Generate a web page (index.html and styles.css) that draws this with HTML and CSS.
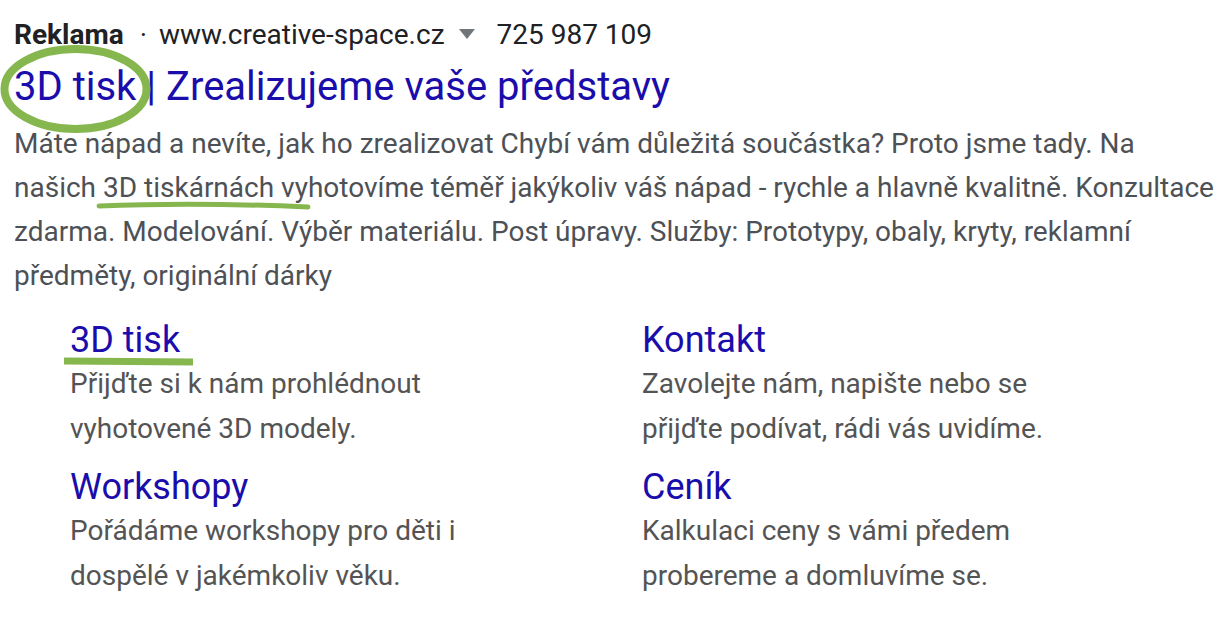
FILE: index.html
```html
<!DOCTYPE html>
<html lang="cs">
<head>
  <meta charset="UTF-8">
  <title>Reklama - 3D tisk</title>
  <link rel="stylesheet" href="styles.css">
</head>
<body>

<div class="ad">
  <div class="ad-header">
    <span class="ad-label">Reklama</span>
    <span class="ad-dot">·</span>
    <span class="ad-url">www.creative-space.cz</span>
    <span class="ad-arrow"></span>
    <span class="ad-phone">725 987 109</span>
  </div>

  <h1 class="ad-title"><a href="#">3D tisk | Zrealizujeme vaše představy</a></h1>

  <p class="ad-desc">Máte nápad a nevíte, jak ho zrealizovat Chybí vám důležitá součástka? Proto jsme tady. Na našich 3D tiskárnách vyhotovíme téměř jakýkoliv váš nápad - rychle a hlavně kvalitně. Konzultace zdarma. Modelování. Výběr materiálu. Post úpravy. Služby: Prototypy, obaly, kryty, reklamní předměty, originální dárky</p>

  <div class="sitelinks">
    <div class="sitelink">
      <a href="#">3D tisk</a>
      <p>Přijďte si k nám prohlédnout vyhotovené 3D modely.</p>
    </div>
    <div class="sitelink">
      <a href="#">Kontakt</a>
      <p>Zavolejte nám, napište nebo se přijďte podívat, rádi vás uvidíme.</p>
    </div>
    <div class="sitelink">
      <a href="#">Workshopy</a>
      <p>Pořádáme workshopy pro děti i dospělé v jakémkoliv věku.</p>
    </div>
    <div class="sitelink">
      <a href="#">Ceník</a>
      <p>Kalkulaci ceny s vámi předem probereme a domluvíme se.</p>
    </div>
  </div>

  <!-- green marker annotations -->
  <svg class="mark mark-circle" width="160" height="100" viewBox="0 0 160 100">
    <ellipse cx="75.5" cy="44" rx="71" ry="40" fill="none" stroke="#86b74f" stroke-width="8"/>
  </svg>
  <svg class="mark mark-line1" width="220" height="14" viewBox="0 0 220 14">
    <path d="M3 7 Q 100 3 212 8" fill="none" stroke="#86b74f" stroke-width="5" stroke-linecap="round"/>
  </svg>
  <svg class="mark mark-line2" width="140" height="14" viewBox="0 0 140 14">
    <path d="M2 6 L 131 7" fill="none" stroke="#86b74f" stroke-width="7"/>
  </svg>
</div>

</body>
</html>
```

FILE: styles.css
```css
body {
  margin: 0;
  background: #fff;
  font-family: Roboto, "Noto Sans", Arial, sans-serif;
}
.ad {
  position: relative;
  padding: 14px 0 0 14px;
}
.ad-header {
  display: flex;
  align-items: center;
  font-size: 28px;
  font-stretch: 90%;
  color: #202124;
  height: 40px;
}
.ad-label {
  font-weight: 700;
}
.ad-dot {
  margin: 0 12px 0 16px;
}
.ad-arrow {
  width: 0;
  height: 0;
  border-left: 8px solid transparent;
  border-right: 8px solid transparent;
  border-top: 10px solid #70757a;
  margin: 0 22px 0 14px;
}
.ad-title {
  margin: 6px 0 0;
  font-size: 40px;
  font-weight: 400;
  font-stretch: 90%;
  line-height: 54px;
}
.ad-title a {
  color: #1a0dab;
  text-decoration: none;
}
.ad-desc {
  margin: 8px 0 0;
  width: 1205px;
  font-size: 28px;
  font-stretch: 94%;
  line-height: 44px;
  color: #4d5156;
}
.sitelinks {
  display: grid;
  grid-template-columns: 572px 572px;
  padding: 20px 0 0 56px;
}
.sitelink {
  margin-bottom: 14px;
}
.sitelink a {
  display: block;
  font-size: 36px;
  line-height: 44px;
  color: #1a0dab;
  text-decoration: none;
}
.sitelink p {
  margin: 0;
  width: 440px;
  font-size: 28px;
  line-height: 44.5px;
  color: #545454;
}
.mark {
  position: absolute;
}
.mark-circle {
  left: 0;
  top: 45px;
}
.mark-line1 {
  left: 96px;
  top: 199px;
}
.mark-line2 {
  left: 62px;
  top: 355px;
}
```
